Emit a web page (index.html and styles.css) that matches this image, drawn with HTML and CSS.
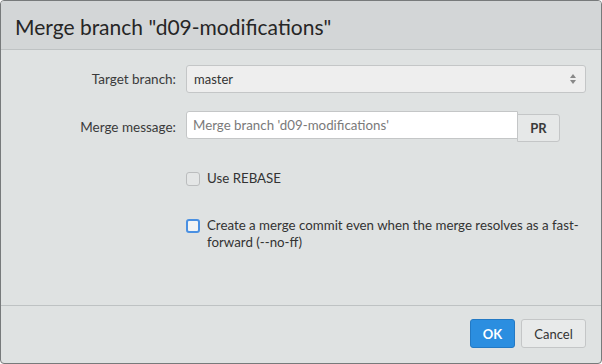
FILE: index.html
```html
<!DOCTYPE html>
<html>
<head>
<meta charset="utf-8">
<link rel="stylesheet" href="styles.css">
</head>
<body>
<div class="dialog">
  <div class="header">
    <h1 class="title">Merge branch "d09-modifications"</h1>
  </div>
  <div class="body">
    <div class="row row-select">
      <label class="label">Target branch:</label>
      <div class="select">
        <span class="select-value">master</span>
        <svg class="select-arrows" width="8" height="12" viewBox="0 0 8 12">
          <path d="M4 1 L7 5 H1 Z" fill="#888"/>
          <path d="M4 11 L7 7 H1 Z" fill="#888"/>
        </svg>
      </div>
    </div>
    <div class="row row-message">
      <label class="label">Merge message:</label>
      <div class="input-group">
        <input class="input" type="text" placeholder="Merge branch 'd09-modifications'">
        <button class="btn btn-pr">PR</button>
      </div>
    </div>
    <div class="check check-rebase">
      <span class="box"></span>
      <span class="check-text">Use REBASE</span>
    </div>
    <div class="check check-noff">
      <span class="box box-focus"></span>
      <span class="check-text">Create a merge commit even when the merge resolves as a fast-forward (--no-ff)</span>
    </div>
  </div>
  <div class="footer">
    <button class="btn btn-ok">OK</button>
    <button class="btn btn-cancel">Cancel</button>
  </div>
</div>
</body>
</html>
```

FILE: styles.css
```css
* { box-sizing: border-box; }
html, body { margin: 0; padding: 0; background: #ffffff; }
body { font-family: "Lato", "Liberation Sans", sans-serif; color: #333; }

.dialog {
  width: 602px;
  height: 364px;
  border: 1px solid #777a7b;
  border-radius: 4px;
  background: #dfe2e2;
  display: flex;
  flex-direction: column;
  overflow: hidden;
}

.header {
  height: 49px;
  background: #d3d6d7;
  border-bottom: 1px solid #bec2c3;
  display: flex;
  align-items: center;
  padding-left: 14px;
  flex: none;
}
.title {
  margin: 0;
  font-weight: 400;
  font-size: 21px;
  color: #262626;
  position: relative;
  top: 1px;
}

.body {
  flex: 1;
  padding: 15px 15px 0 0;
  border-bottom: 1px solid #bec2c3;
}

.row {
  display: flex;
  align-items: center;
}
.label {
  width: 175px;
  text-align: right;
  font-size: 13.5px;
  color: #3a3a3a;
  flex: none;
}

.select {
  flex: none;
  width: 400px;
  height: 28px;
  margin-left: 10px;
  background: #eeeeee;
  border: 1px solid #c4c6c7;
  border-radius: 3px;
  display: flex;
  align-items: center;
  justify-content: space-between;
  padding: 0 8px 0 7px;
  font-size: 13px;
  color: #333;
}
.select-arrows { display: block; }

.row-message { margin-top: 18px; }
.input-group {
  display: flex;
  align-items: flex-start;
  margin-left: 10px;
}
.input {
  width: 332px;
  height: 28px;
  border: 1px solid #c4c6c7;
  border-radius: 3px 0 0 3px;
  background: #ffffff;
  font-family: inherit;
  font-size: 13.3px;
  padding: 0 6px;
  color: #333;
  outline: none;
}
.input::placeholder { color: #7a7a7a; }

.btn {
  font-family: inherit;
  border-radius: 3px;
  cursor: pointer;
}
.btn-pr {
  width: 43px;
  height: 28px;
  margin-top: 3px;
  margin-left: -1px;
  border: 1px solid #c4c6c7;
  border-radius: 0 3px 3px 0;
  background: #e6e8e8;
  font-size: 13px;
  font-weight: 700;
  color: #3a3a3a;
}

.check {
  display: flex;
  align-items: flex-start;
  margin-left: 185px;
  font-size: 13.3px;
  color: #333;
}
.check-rebase { margin-top: 28px; }
.check-noff { margin-top: 30px; width: 405px; }
.check-text { line-height: 17px; }
.box {
  flex: none;
  width: 14px;
  height: 14px;
  border: 1px solid #bbbdbe;
  border-radius: 3px;
  background: #e4e6e6;
  margin-right: 7px;
  margin-top: 2px;
}
.box-focus {
  border: 2px solid #4a90e2;
  background: #f2f4f4;
}

.footer {
  height: 57px;
  flex: none;
  display: flex;
  justify-content: flex-end;
  align-items: flex-start;
  padding: 13px 15px 0 0;
  gap: 6px;
}
.btn-ok {
  width: 45px;
  height: 29px;
  background: #2b8ee0;
  border: 1px solid #2379c4;
  color: #ffffff;
  font-weight: 700;
  font-size: 13px;
}
.btn-cancel {
  width: 65px;
  height: 29px;
  background: #e8eaea;
  border: 1px solid #c4c6c7;
  color: #333;
  font-size: 13px;
}
```
